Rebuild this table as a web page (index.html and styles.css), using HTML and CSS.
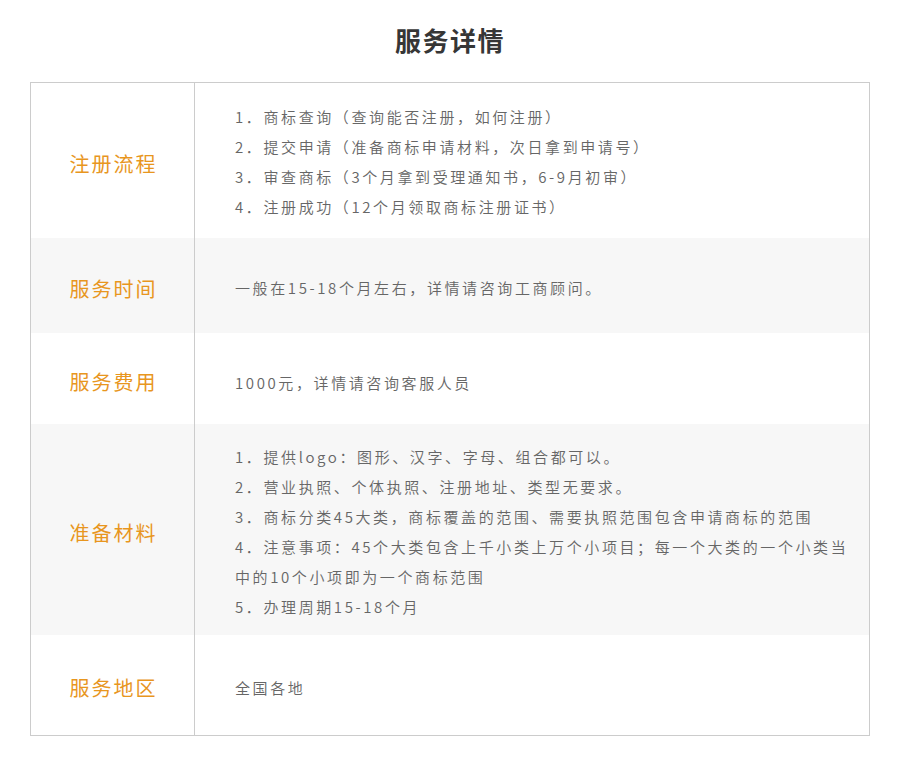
FILE: index.html
```html
<!DOCTYPE html>
<html lang="zh-CN">
<head>
<meta charset="utf-8">
<title>服务详情</title>
<link rel="stylesheet" href="styles.css">
</head>
<body>
<main class="page">
  <h1 class="title">服务详情</h1>
  <section class="table">
    <div class="row row-flow">
      <div class="label">注册流程</div>
      <div class="content">
        <p>1．商标查询（查询能否注册，如何注册）</p>
        <p>2．提交申请（准备商标申请材料，次日拿到申请号）</p>
        <p>3．审查商标（3个月拿到受理通知书，6-9月初审）</p>
        <p>4．注册成功（12个月领取商标注册证书）</p>
      </div>
    </div>
    <div class="row row-time alt">
      <div class="label">服务时间</div>
      <div class="content">
        <p>一般在15-18个月左右，详情请咨询工商顾问。</p>
      </div>
    </div>
    <div class="row row-fee">
      <div class="label">服务费用</div>
      <div class="content">
        <p>1000元，详情请咨询客服人员</p>
      </div>
    </div>
    <div class="row row-material alt">
      <div class="label">准备材料</div>
      <div class="content">
        <p>1．提供logo：图形、汉字、字母、组合都可以。</p>
        <p>2．营业执照、个体执照、注册地址、类型无要求。</p>
        <p>3．商标分类45大类，商标覆盖的范围、需要执照范围包含申请商标的范围</p>
        <p>4．注意事项：45个大类包含上千小类上万个小项目；每一个大类的一个小类当中的10个小项即为一个商标范围</p>
        <p>5．办理周期15-18个月</p>
      </div>
    </div>
    <div class="row row-area">
      <div class="label">服务地区</div>
      <div class="content">
        <p>全国各地</p>
      </div>
    </div>
  </section>
</main>
</body>
</html>
```

FILE: styles.css
```css
* {
  box-sizing: border-box;
}

html, body {
  margin: 0;
  padding: 0;
  background: #ffffff;
}

body {
  font-family: "Noto Sans CJK SC", "Noto Sans", sans-serif;
  color: #666666;
}

.page {
  width: 840px;
  margin: 0 auto;
  padding-top: 20px;
}

.title {
  margin: 0 0 22px;
  height: 40px;
  line-height: 40px;
  text-align: center;
  font-size: 26px;
  font-weight: 700;
  letter-spacing: 1.5px;
  color: #363636;
}

.table {
  border: 1px solid #cccccc;
}

.row {
  display: grid;
  grid-template-columns: 164px 1fr;
  background: #ffffff;
}

.row.alt {
  background: #f7f7f7;
}

.label {
  display: flex;
  align-items: center;
  justify-content: center;
  padding-top: 5px;
  padding-left: 2px;
  border-right: 1px solid #cccccc;
  font-size: 20px;
  font-weight: 400;
  letter-spacing: 2px;
  color: #e8961e;
}

.content {
  padding-left: 40px;
  padding-right: 16px;
  font-size: 15px;
  font-weight: 350;
  line-height: 30px;
  letter-spacing: 2.6px;
  color: #666666;
}

.content p {
  margin: 0;
}

.row-flow .content {
  padding-top: 19px;
  padding-bottom: 16px;
}

.row-time .content {
  padding-top: 35px;
  padding-bottom: 30px;
}

.row-fee .content {
  padding-top: 35px;
  padding-bottom: 26px;
}

.row-material .content {
  padding-top: 18px;
  padding-bottom: 13px;
}

.row-area .content {
  padding-top: 38px;
  padding-bottom: 32px;
}
```
